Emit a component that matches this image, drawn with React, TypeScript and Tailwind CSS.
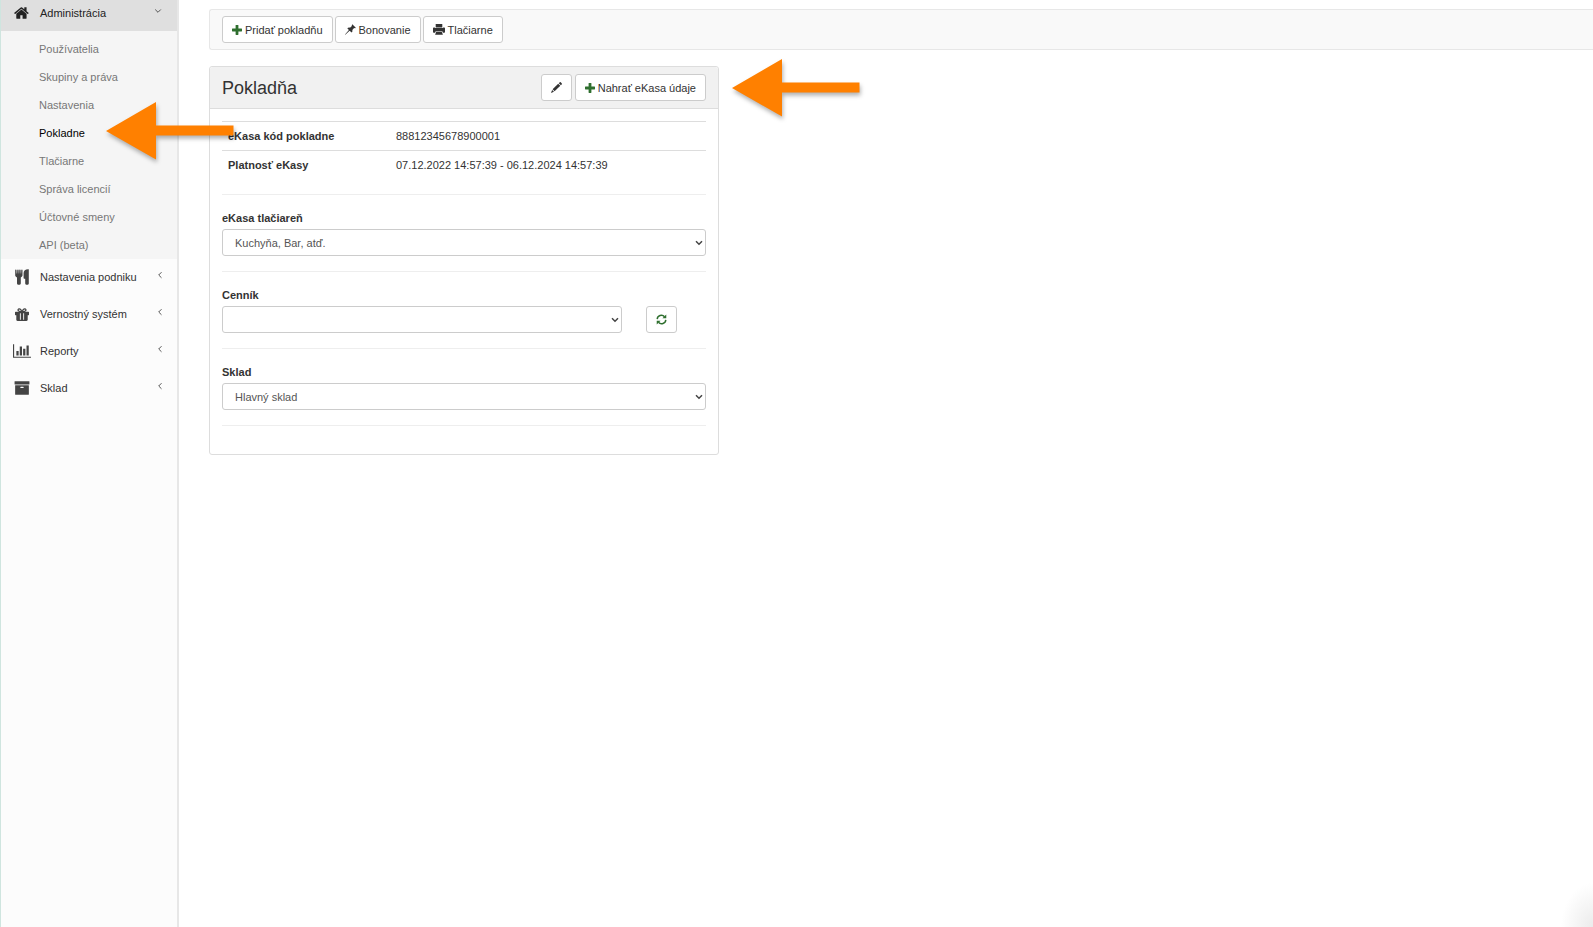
import type { ReactNode } from "react";
import { clsx } from "clsx";

const adminLinks = [
  "Používatelia",
  "Skupiny a práva",
  "Nastavenia",
  "Pokladne",
  "Tlačiarne",
  "Správa licencií",
  "Účtovné smeny",
  "API (beta)",
];

interface IconProps {
  className?: string;
}

function HomeIcon({ className }: IconProps) {
  return (
    <svg viewBox="0 0 1792 1792" className={className} fill="currentColor" aria-hidden="true">
      <path d="M1408 992v480q0 26-19 45t-45 19h-384v-384h-256v384h-384q-26 0-45-19t-19-45v-480q0-1 .5-3t.5-3l575-474 575 474q1 2 1 6zm223-69l-62 74q-8 9-21 11h-3q-13 0-21-7l-692-577-692 577q-12 8-24 7-13-2-21-11l-62-74q-8-10-7-23.5t11-21.5l719-599q32-26 76-26t76 26l244 204v-195q0-14 9-23t23-9h192q14 0 23 9t9 23v408l219 182q10 8 11 21.5t-7 23.5z" />
    </svg>
  );
}

function CutleryIcon({ className }: IconProps) {
  return (
    <svg viewBox="0 0 14 16" className={className} fill="currentColor" aria-hidden="true">
      <path d="M.2 1C.2.3 1.500.3 1.500 1l.2 3.500h.4L2.300 1c.1-.7 1.300-.7 1.300 0l.2 3.500h.3L4.300 1c0-.7 1.200-.7 1.300 0l.2 3.500h.3L6.300 1c.1-.7 1.200-.7 1.200 0v5.200c0 1-.8 1.800-1.700 2.200v5.900c0 1-.8 1.500-1.900 1.500S2 15.300 2 14.300V8.400C1 8 .2 7.200.2 6.200z" />
      <path d="M13.800.6v13.700c0 1-.8 1.500-1.800 1.500s-1.800-.5-1.800-1.500V9.700H9.100c-.3 0-.5-.2-.5-.5V4c0-2.200 1.700-3.700 4.500-3.700.4 0 .7.100.7.300z" />
    </svg>
  );
}

function GiftIcon({ className }: IconProps) {
  return (
    <svg viewBox="0 0 14 13" className={className} fill="currentColor" aria-hidden="true">
      <path
        d="M6.600 3.900C6.400 2.200 5.400.9 4.200.9 3.200.9 2.700 1.900 3.300 2.600c.6.8 1.800 1.200 3.300 1.300zM7.400 3.900C7.600 2.200 8.600.9 9.800.9c1 0 1.500 1 .9 1.700-.6.8-1.800 1.200-3.300 1.300z"
        fill="none"
        stroke="currentColor"
        strokeWidth="1.300"
      />
      <path
        fillRule="evenodd"
        d="M.7 3.700h12.600c.4 0 .7.200.7.600v2.500c0 .3-.2.500-.5.500h-.8v4.500c0 .7-.5 1.200-1.200 1.200h-9c-.7 0-1.200-.5-1.200-1.200V7.300H.5c-.3 0-.5-.2-.5-.5V4.300c0-.4.3-.6.700-.6zM4.900 5.200v6.600h.9V5.200zM8.200 5.200v6.600h.9V5.200z"
      />
    </svg>
  );
}

function ChartIcon({ className }: IconProps) {
  return (
    <svg viewBox="0 0 2048 1792" className={className} fill="currentColor" aria-hidden="true">
      <path d="M640 896v512h-256v-512h256zm384-512v1024h-256v-1024h256zm1024 1152v128h-2048v-1536h128v1408h1920zm-640-896v768h-256v-768h256zm384-384v1152h-256v-1152h256z" />
    </svg>
  );
}

function ArchiveIcon({ className }: IconProps) {
  return (
    <svg viewBox="0 0 1792 1792" className={className} fill="currentColor" aria-hidden="true">
      <path d="M1088 832q0-26-19-45t-45-19h-256q-26 0-45 19t-19 45 19 45 45 19h256q26 0 45-19t19-45zm576-192v960q0 26-19 45t-45 19h-1408q-26 0-45-19t-19-45v-960q0-26 19-45t45-19h1408q26 0 45 19t19 45zm64-448v256q0 26-19 45t-45 19h-1536q-26 0-45-19t-19-45v-256q0-26 19-45t45-19h1536q26 0 45 19t19 45z" />
    </svg>
  );
}

function PlusIcon({ className }: IconProps) {
  return (
    <svg viewBox="0 0 10 10" className={className} fill="currentColor" aria-hidden="true">
      <path d="M3.600.4c0-.2.2-.4.400-.4h2c.2 0 .4.200.4.400v3.200h3.200c.2 0 .4.200.4.400v2c0 .2-.2.400-.4.400H6.400v3.200c0 .2-.2.400-.4.400H4c-.2 0-.4-.2-.4-.4V6.400H.4C.2 6.400 0 6.200 0 6V4c0-.2.2-.4.400-.4h3.200z" />
    </svg>
  );
}

function PushpinIcon({ className }: IconProps) {
  return (
    <svg viewBox="0 0 11 11" className={className} fill="currentColor" aria-hidden="true">
      <path d="M7.300.2 10.800 3.700c-.5.600-1.200.7-1.700.4L7.300 6c.3 1 .1 1.900-.6 2.600L4.600 6.800.3 10.700 0 10.500l3.900-4.400L2.300 4.300c.7-.7 1.700-.9 2.700-.6l1.900-1.800C6.600 1.400 6.700.8 7.300.2z" />
    </svg>
  );
}

function PrintIcon({ className }: IconProps) {
  return (
    <svg viewBox="0 0 12 11" className={className} fill="currentColor" aria-hidden="true">
      <path d="M2.700.4c0-.2.2-.4.400-.4h5.800c.2 0 .4.200.4.400v3H2.700z" />
      <path d="M1 3.500h.9v.6h8.200v-.6h.9c.6 0 1 .4 1 1v3.200c0 .6-.4 1-1 1H9.900l-.6-1.500H2.700l-.6 1.500H1c-.6 0-1-.4-1-1V4.500c0-.6.4-1 1-1z" />
      <path d="M3.200 7.700h5.600l1.100 3H2.100z" />
    </svg>
  );
}

function PencilIcon({ className }: IconProps) {
  return (
    <svg viewBox="0 0 11 11" className={className} fill="currentColor" aria-hidden="true">
      <path d="M8.600.4c.3-.4.700-.4 1.100-.1l1 1c.3.3.3.700 0 1.100l-.8.800-2.100-2zM7.200 1.800l2.100 2-5.700 5.500-2-2zM1.100 7.900l1.900 1.900-3 1.100z" />
    </svg>
  );
}

function RefreshIcon({ className }: IconProps) {
  return (
    <svg viewBox="0 0 12 12" className={className} fill="currentColor" aria-hidden="true">
      <path
        d="M1.300 5.600A4.600 4.600 0 0 1 9.300 2.900M10.700 6.400A4.600 4.600 0 0 1 2.700 9.100"
        fill="none"
        stroke="currentColor"
        strokeWidth="1.600"
      />
      <path d="M11.200.5v4.200H7zM.8 11.500V7.300H5z" />
    </svg>
  );
}

function AngleIcon({ open }: { open?: boolean }) {
  return (
    <svg
      viewBox="0 0 8 8"
      className={clsx("mb-1 size-2 text-[#555]", open && "-rotate-90")}
      fill="none"
      stroke="currentColor"
      aria-hidden="true"
    >
      <path d="M5.500 1.200 2.700 4l2.800 2.800" />
    </svg>
  );
}

function Arrow({ className }: IconProps) {
  return (
    <svg
      viewBox="0 0 128 58"
      className={clsx(
        "pointer-events-none absolute z-10 h-[58px] w-32 max-w-none overflow-visible drop-shadow-[1px_3px_2px_rgba(0,0,0,0.3)]",
        className,
      )}
      aria-hidden="true"
    >
      <path d="M0 29 50 0v23.500h77.500v10H50v24z" fill="#ff8000" />
    </svg>
  );
}

function NavItem({ icon, label }: { icon: ReactNode; label: string }) {
  return (
    <a href="#" className="flex h-[37px] items-center pr-[13px] pb-px pl-[11px] text-[#333]">
      <span className="flex w-5 justify-center text-[#444]">{icon}</span>
      <span className="ml-2 flex-1">{label}</span>
      <AngleIcon />
    </a>
  );
}

function Button({ children, label }: { children: ReactNode; label?: string }) {
  return (
    <button
      type="button"
      aria-label={label}
      className="flex h-[27px] items-center gap-[3px] rounded-[3px] border border-[#ccc] bg-white px-[9px] text-[#333]"
    >
      {children}
    </button>
  );
}

function Select({ id, option }: { id: string; option: string }) {
  return (
    <div className="relative w-full">
      <select
        id={id}
        className="block h-[27px] w-full appearance-none rounded-[3px] border border-[#ccc] bg-white px-3 text-[#555]"
      >
        <option>{option}</option>
      </select>
      <svg
        viewBox="0 0 8 6"
        className="pointer-events-none absolute top-[11px] right-[3px] h-1.5 w-2 text-[#444]"
        fill="none"
        stroke="currentColor"
        strokeWidth="1.500"
        aria-hidden="true"
      >
        <path d="M1 1.200 4 4.200 7 1.200" />
      </svg>
    </div>
  );
}

export default function App() {
  return (
    <div className="flex min-h-screen bg-white font-['Liberation_Sans',Arial,sans-serif] text-[11px] leading-4 text-[#333]">
      <nav className="w-[179px] shrink-0 border-r-2 border-l border-r-[#e7e7e7] border-l-[#cfe5df] bg-[#fcfcfc]">
        <a href="#" className="flex h-[31px] items-center bg-[#dfdfdf] pr-[15px] pb-[6px] pl-[11px] text-[#222]">
          <span className="flex w-5 justify-center">
            <HomeIcon className="size-4" />
          </span>
          <span className="ml-2 flex-1">Administrácia</span>
          <AngleIcon open />
        </a>
        <ul className="bg-[#f5f5f5] pt-1">
          {adminLinks.map((link) => (
            <li key={link} className="relative">
              <a
                href="#"
                className={clsx("flex h-7 items-center pl-[38px]", link === "Pokladne" ? "text-black" : "text-[#777]")}
              >
                {link}
              </a>
              {link === "Pokladne" && <Arrow className="-top-[17px] left-[105px]" />}
            </li>
          ))}
        </ul>
        <NavItem icon={<CutleryIcon className="h-4 w-3.5" />} label="Nastavenia podniku" />
        <NavItem icon={<GiftIcon className="h-[13px] w-3.5" />} label="Vernostný systém" />
        <NavItem icon={<ChartIcon className="h-4 w-[18px]" />} label="Reporty" />
        <NavItem icon={<ArchiveIcon className="size-4" />} label="Sklad" />
      </nav>

      <main className="min-w-0 flex-1 pt-[9px] pl-[30px]">
        <div className="flex gap-[2px] rounded-l-[3px] border border-r-0 border-[#e7e7e7] bg-[#f9f9f9] px-3 py-[6px]">
          <Button>
            <PlusIcon className="size-2.5 text-[#2f6f2f]" />
            Pridať pokladňu
          </Button>
          <Button>
            <PushpinIcon className="size-[11px]" />
            Bonovanie
          </Button>
          <Button>
            <PrintIcon className="h-[11px] w-3" />
            Tlačiarne
          </Button>
        </div>

        <section className="relative mt-4 w-full max-w-[510px] rounded-[3px] border border-[#ddd]">
          <Arrow className="-top-2 left-[522px]" />
          <header className="flex items-center gap-[3px] rounded-t-[3px] border-b border-[#ddd] bg-[#f1f1f1] px-3 py-[7px]">
            <h1 className="flex-1 text-lg leading-6">Pokladňa</h1>
            <Button label="Upraviť">
              <PencilIcon className="size-[11px]" />
            </Button>
            <Button>
              <PlusIcon className="size-2.5 text-[#2f6f2f]" />
              Nahrať eKasa údaje
            </Button>
          </header>

          <div className="px-3 pt-3 pb-7">
            <table className="mb-[15px] w-full text-left">
              <tbody>
                <tr className="border-t border-[#ddd]">
                  <th className="w-[168px] px-[6px] py-[6px] font-bold">eKasa kód pokladne</th>
                  <td className="px-[6px] py-[6px]">88812345678900001</td>
                </tr>
                <tr className="border-t border-[#ddd]">
                  <th className="px-[6px] py-[6px] font-bold">Platnosť eKasy</th>
                  <td className="px-[6px] py-[6px]">07.12.2022 14:57:39 - 06.12.2024 14:57:39</td>
                </tr>
              </tbody>
            </table>
            <hr className="mb-[15px] border-[#eee]" />

            <label htmlFor="printer" className="mb-[3px] block font-bold">
              eKasa tlačiareň
            </label>
            <Select id="printer" option="Kuchyňa, Bar, atď." />
            <hr className="my-[15px] border-[#eee]" />

            <label htmlFor="pricelist" className="mb-[3px] block font-bold">
              Cenník
            </label>
            <div className="flex gap-6">
              <Select id="pricelist" option="" />
              <div className="w-[60px] shrink-0">
                <Button label="Obnoviť">
                  <RefreshIcon className="size-[11px] text-[#2f6f2f]" />
                </Button>
              </div>
            </div>
            <hr className="my-[15px] border-[#eee]" />

            <label htmlFor="stock" className="mb-[3px] block font-bold">
              Sklad
            </label>
            <Select id="stock" option="Hlavný sklad" />
            <hr className="mt-[15px] border-[#eee]" />
          </div>
        </section>
      </main>

      <div className="pointer-events-none fixed right-0 bottom-0 h-11 w-8 bg-[radial-gradient(farthest-side_at_bottom_right,#ebebeb,#ffffff)]" />
    </div>
  );
}
